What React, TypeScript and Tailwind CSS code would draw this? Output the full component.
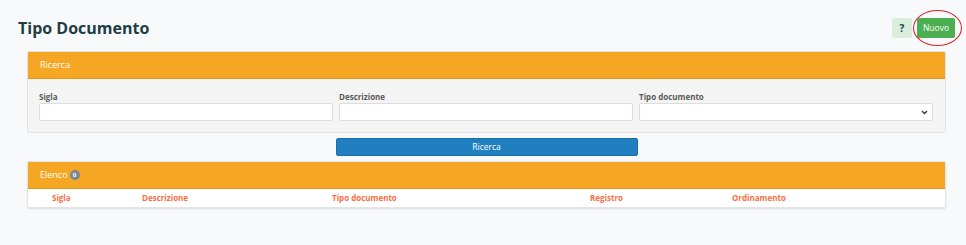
import React from "react";

export default function App() {
  const labelCls = "block text-[8px] font-bold text-[#5a5a5a] leading-[11px] mb-[1px]";
  const inputCls = "h-[18px] w-full rounded-[2px] border border-[#dcdcdc] bg-white";
  return (
    <div
      className="h-[245px] w-full overflow-hidden bg-[#f8f9fb] pt-[18px]"
      style={{ fontFamily: '"Open Sans", "Noto Sans", sans-serif' }}
    >
      <div className="flex h-[20px] items-center justify-between pl-[18px] pr-[11px]">
        <h1 className="text-[16px] font-bold leading-none text-[#1f3d44]">Tipo Documento</h1>
        <div className="flex items-center gap-[5px]">
          <div className="flex h-[20px] w-[20px] items-center justify-center rounded-[2px] bg-[#d8eedb] text-[10px] font-bold text-[#1f3d44]">
            ?
          </div>
          <div className="relative">
            <div className="flex h-[20px] w-[38px] items-center justify-center rounded-[2px] bg-[#4cae50] text-[8.5px] text-white">
              Nuovo
            </div>
            <div className="pointer-events-none absolute -left-[4px] -right-[7px] -top-[8px] -bottom-[8px] rounded-[50%] border-[1.5px] border-[#d9202a]" />
          </div>
        </div>
      </div>

      <div className="ml-[27px] mr-[20px] mt-[13px]">
        <div className="overflow-hidden rounded-[2px] border border-[#e2e2e2]">
          <div className="flex h-[27px] items-center bg-[#f5a623] pl-[12px] text-[9px] text-white border-b border-[#e6981c]">
            Ricerca
          </div>
          <div className="grid grid-cols-3 gap-[6px] bg-[#f4f4f4] pl-[11px] pr-[12px] pt-[12px] pb-[11px]">
            <div>
              <label className={labelCls}>Sigla</label>
              <div className={inputCls} />
            </div>
            <div>
              <label className={labelCls}>Descrizione</label>
              <div className={inputCls} />
            </div>
            <div>
              <label className={labelCls}>Tipo documento</label>
              <div className={inputCls + " flex items-center justify-end pr-[4px]"}>
                <svg width="7" height="5" viewBox="0 0 7 5">
                  <path d="M1 1 L3.5 3.5 L6 1" stroke="#333" strokeWidth="1.4" fill="none" />
                </svg>
              </div>
            </div>
          </div>
        </div>

        <div className="mt-[5px] flex justify-center">
          <div className="flex h-[18px] w-[302px] items-center justify-center rounded-[2px] border border-[#1a6fa8] bg-[#1f7fbf] text-[8.5px] text-white">
            Ricerca
          </div>
        </div>

        <div className="mt-[5px] overflow-hidden rounded-[2px] border border-[#e4e4e4] shadow-[0_1px_2px_rgba(0,0,0,0.12)]">
          <div className="flex h-[27px] items-center gap-[2px] bg-[#f5a623] pl-[12px] text-[9px] text-white border-b border-[#e6981c]">
            <span>Elenco</span>
            <span className="flex h-[10px] w-[10px] items-center justify-center rounded-full bg-[#7d8796] text-[6px] font-bold text-white">
              0
            </span>
          </div>
          <div className="grid h-[18px] grid-cols-[90px_190px_258px_142px_1fr] items-center bg-white pl-[24px] text-[8px] font-bold text-[#fa6f45]">
            <span>Sigla</span>
            <span>Descrizione</span>
            <span>Tipo documento</span>
            <span>Registro</span>
            <span>Ordinamento</span>
          </div>
        </div>
      </div>
    </div>
  );
}
